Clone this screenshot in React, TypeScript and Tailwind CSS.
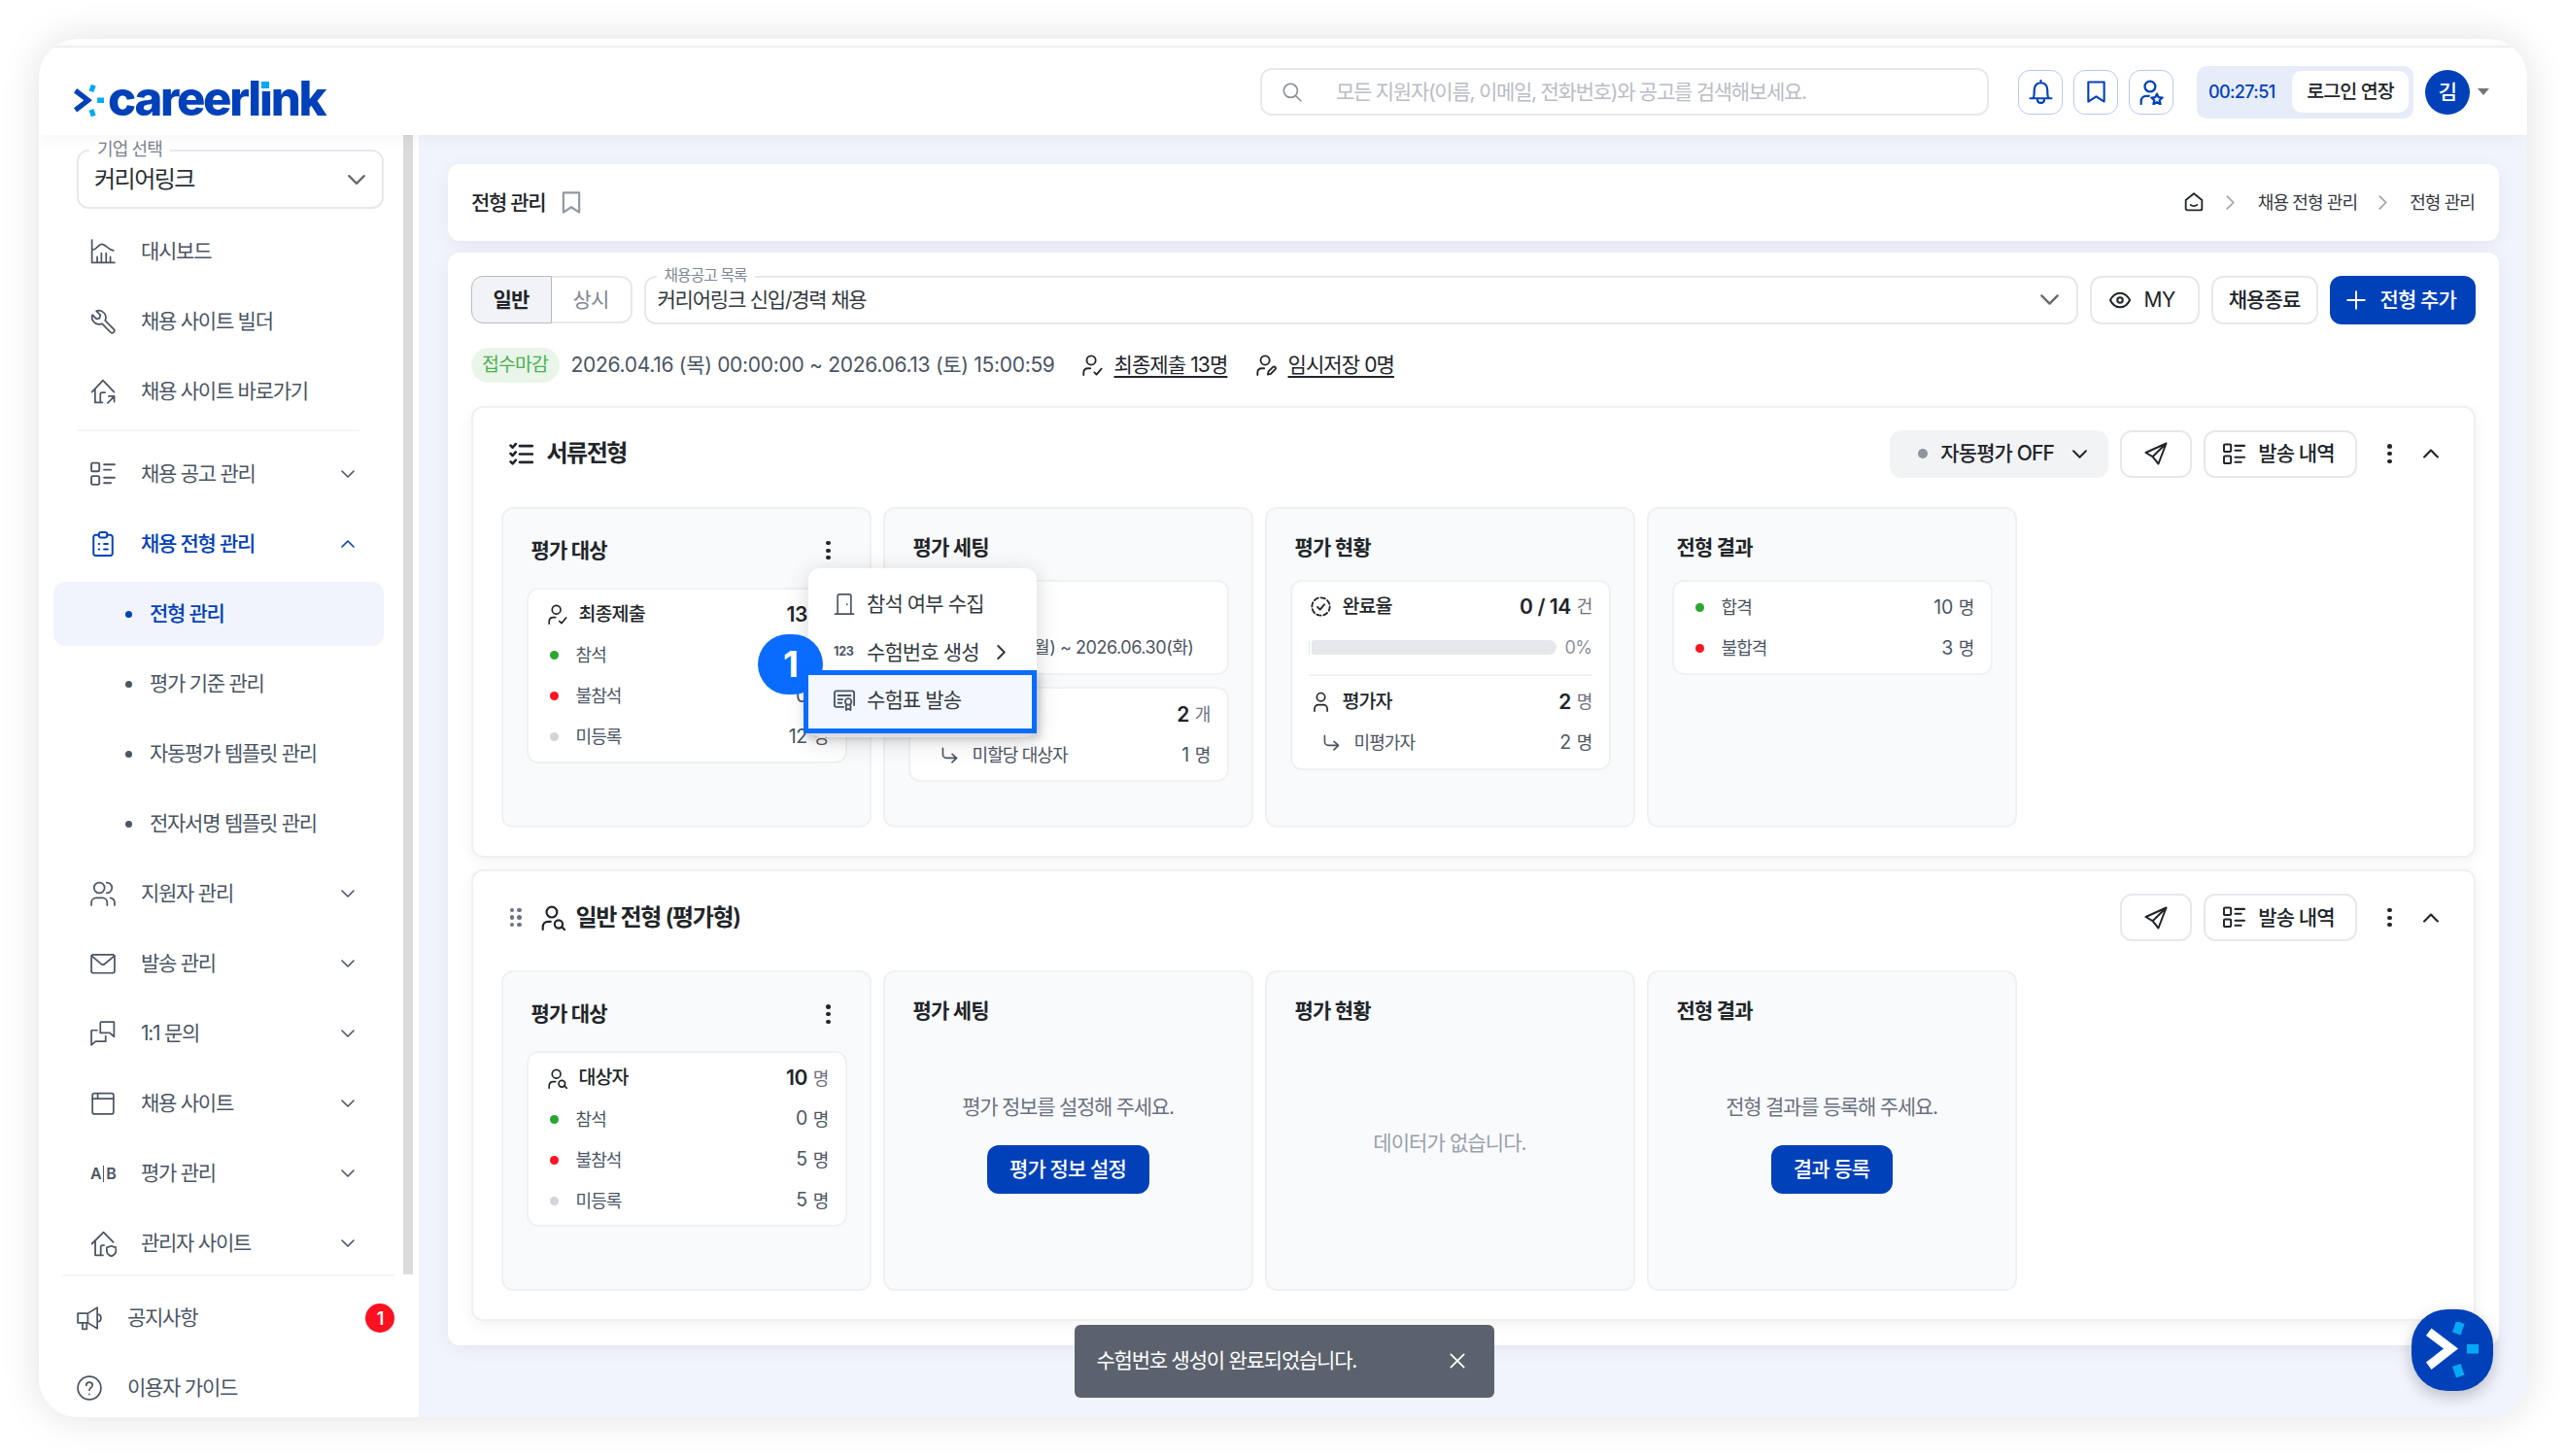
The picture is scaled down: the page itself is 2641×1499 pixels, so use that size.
import React from "react";
import clsx from "clsx";

type IconProps = { className?: string; sw?: number; children?: React.ReactNode; box?: string };

function Svg({ className, sw = 1.6, children, box = "0 0 24 24" }: IconProps) {
  return (
    <svg
      viewBox={box}
      className={clsx("shrink-0", className)}
      fill="none"
      stroke="currentColor"
      strokeWidth={sw}
      strokeLinecap="round"
      strokeLinejoin="round"
    >
      {children}
    </svg>
  );
}

const ChartIcon = () => (
  <Svg className="size-[26px]">
    <path d="M1.5 1v21.5h21.5M1.5 10.5c5 0 5.500-5.500 9.500-5.500s5.500 5.500 11 6M6.500 22v-5M10.500 22v-8.500M15 22v-8.500M19 22v-5" />
  </Svg>
);
const WrenchIcon = () => (
  <Svg className="size-[26px]">
    <path d="M22.200 19.200 14 11a6.600 6.600 0 0 0-8.300-9L9.500 5.800 8.800 8.800 5.800 9.500 2 5.700a6.600 6.600 0 0 0 9 8.300l8.200 8.200a2.100 2.100 0 0 0 3-3Z" />
  </Svg>
);
const HomeLinkIcon = () => (
  <Svg className="size-[26px]">
    <path d="M1.500 12.500 12 1.500l10.500 11M4.500 10v12.500h7M9.500 22v-7.500a1.500 1.500 0 0 1 1.500-1.500h3M16.500 23l6-6M17.500 16.500h5.200v5.200" />
  </Svg>
);
const ListIcon = ({ className = "size-[26px]", sw = 1.7 }: IconProps) => (
  <Svg className={className} sw={sw}>
    <rect x="1" y="1.500" width="7.500" height="8" rx="1.200" />
    <rect x="1" y="14" width="7.500" height="8" rx="1.200" />
    <path d="M13 3h10M13 8h6.500M13 15.500h10M13 20.500h6.500" />
  </Svg>
);
const ClipboardIcon = () => (
  <Svg className="size-[26px]" sw={1.8}>
    <path d="M8 3.500H5a2 2 0 0 0-2 2V21a2 2 0 0 0 2 2h14a2 2 0 0 0 2-2V5.500a2 2 0 0 0-2-2h-3" />
    <rect x="8" y="1" width="8" height="5" rx="2" />
    <path d="M8 12h.5M13 12h3.500M8 17h.5M13 17h3.500" />
  </Svg>
);
const UsersIcon = () => (
  <Svg className="size-[26px]">
    <circle cx="8.500" cy="6.500" r="5" />
    <path d="M1 23v-2.500c0-2.500 2-4.500 4.500-4.500h6c2.500 0 4.500 2 4.500 4.500V23M15.500 1.500a5 5 0 0 1 0 10M19 16c2.300.5 4 2.300 4 4.500V23" />
  </Svg>
);
const MailIcon = () => (
  <Svg className="size-[26px]">
    <rect x="1" y="3.500" width="22" height="17.500" rx="1.800" />
    <path d="m1.500 5 9 7.500c1 .8 2 .8 3 0l9-7.500" />
  </Svg>
);
const ChatIcon = () => (
  <Svg className="size-[26px]">
    <path d="M10 1h12.500v14l-4-3.500H9.500V2M6.500 9H1v14l4-3.500h9.500v-5" />
  </Svg>
);
const BrowserIcon = () => (
  <Svg className="size-[26px]">
    <rect x="2" y="2.500" width="20" height="19.500" rx="1.800" />
    <path d="M2 7.500h20M7 3v4" />
  </Svg>
);
const AbIcon = () => (
  <span className="flex w-[26px] items-center justify-between text-[16px] leading-none font-semibold">
    <span>A</span>
    <span className="h-[17px] w-[1.5px] bg-current" />
    <span>B</span>
  </span>
);
const HomeShieldIcon = () => (
  <Svg className="size-[27px]">
    <path d="M1.500 12 12 1.500 21 10.500M4.500 9.500v13h7M9.500 22v-7a1.500 1.500 0 0 1 1.500-1.500h1.500M15 15.500l4.200-1.500 4.200 1.500v3c0 2.500-2 4-4.200 5-2.200-1-4.200-2.500-4.200-5Z" />
  </Svg>
);
const MegaphoneIcon = () => (
  <Svg className="size-[26px]">
    <path d="M1 7.500h9.500v9H1ZM10.500 7.500 19.500 2v20l-9-5.500M5.500 17v5.500h4v-5.500M19.500 8.500c2.300 0 3.500 1.500 3.500 3.500s-1.200 3.500-3.500 3.500" />
  </Svg>
);
const HelpIcon = () => (
  <Svg className="size-[26px]">
    <circle cx="12" cy="12" r="11" />
    <path d="M9 9.500c0-1.800 1.300-3 3-3s3 1.200 3 2.800c0 2.200-3 2.400-3 4.700M12 17.800v.2" />
  </Svg>
);

const Chevron = ({ className = "w-[14px]", dir = "down", sw = 2 }: IconProps & { dir?: "down" | "up" | "right" }) => (
  <Svg
    box="0 0 14 14"
    sw={sw}
    className={clsx(className, dir === "up" && "rotate-180", dir === "right" && "-rotate-90")}
  >
    <path d="m1 4 6 6 6-6" />
  </Svg>
);

/* person glyph, with an optional badge in the lower right corner */
function PersonIcon({ kind, className, sw = 2 }: { kind: "check" | "edit" | "search" | "star" | "plain"; className?: string; sw?: number }) {
  return (
    <Svg className={className} sw={sw}>
      {kind === "plain" ? (
        <>
          <circle cx="12" cy="6.500" r="4.800" />
          <path d="M4.500 23v-3a4.500 4.500 0 0 1 4.500-4.500h6a4.500 4.500 0 0 1 4.500 4.500v3" />
        </>
      ) : (
        <>
          <circle cx="11" cy="6.500" r="5" />
          <path d="M2.500 23v-2.500c0-3 2-5 5-5h2.500" />
        </>
      )}
      {kind === "check" && <path d="m14.500 20 2.500 2.500 5.500-6.500" />}
      {kind === "edit" && <path d="m14 22.500.8-3.500 5-5c1.600-1.400 4 1 2.600 2.600l-5 5Z" />}
      {kind === "search" && (
        <>
          <circle cx="17.500" cy="18" r="3.800" />
          <path d="m20.500 20.500 3 3" />
        </>
      )}
      {kind === "star" && (
        <path d="m17.500 13.500 1.500 3.200 3.700.4-2.700 2.500.8 3.700-3.300-1.900-3.300 1.900.8-3.700-2.700-2.500 3.700-.4Z" />
      )}
    </Svg>
  );
}

const BookmarkIcon = ({ className, sw = 2 }: IconProps) => (
  <Svg className={className} sw={sw}>
    <path d="M3.500 1.500h17v21L12 17l-8.500 5.500Z" />
  </Svg>
);

const SubArrow = () => (
  <Svg className="size-[17px]" sw={2.3}>
    <path d="M2 2v9a5 5 0 0 0 5 5h14M15.500 10.500 22 16l-6.500 6.500" />
  </Svg>
);

const Kebab = () => (
  <span className="flex flex-col gap-[3.500px]">
    <span className="size-[4.200px] rounded-full bg-[#212529]" />
    <span className="size-[4.200px] rounded-full bg-[#212529]" />
    <span className="size-[4.200px] rounded-full bg-[#212529]" />
  </span>
);

function Mark({ className, arrow }: { className: string; arrow: string }) {
  return (
    <svg viewBox="0 0 54 58" className={clsx("shrink-0", className)}>
      <path d="M0 14 5.500 6.500 33 27.500 5.500 49 0 41.500 18 27.500Z" fill={arrow} />
      <path d="m31-1 8.500 3-4 11.500-8.500-3ZM42 23h13v9.500H42ZM27 46l8.500-3 4 11.500-8.500 3Z" fill="#04a9f5" />
    </svg>
  );
}

/* ---------- header ---------- */

const HeaderButton = ({ children }: { children: React.ReactNode }) => (
  <button className="flex h-[46px] w-[46px] items-center justify-center rounded-[12px] border-[1.5px] border-[#b6caee] text-[#0041b9]">
    {children}
  </button>
);

function Header() {
  return (
    <header className="relative z-20 flex h-[90px] shrink-0 items-center bg-white pl-[36px] pr-[39px] shadow-[0_2px_16px_rgba(0,0,0,0.05)]">
      <div className="flex h-[40px] items-center">
        <Mark className="mt-[20px] h-[34px] w-[31px]" arrow="#0041b9" />
        <span className="ml-[4px] mt-[15px] text-[49px] leading-[48px] font-extrabold tracking-[-0.046em] text-[#0041b9]">
          careerl
          <span className="relative">
            i
            <span className="absolute left-[1px] top-[9px] h-[13px] w-[12px] bg-white" />
            <span className="absolute left-[2px] top-[12px] h-[7px] w-[8px] bg-[#04a9f5]" />
          </span>
          nk
        </span>
      </div>
      <div className="ml-auto mt-[1px] flex items-center">
        <div className="flex h-[49px] w-[750px] items-center rounded-[12px] border-2 border-[#e7e8ec] pl-[21px]">
          <Svg className="size-[20px] text-[#868e99]" sw={2}>
            <circle cx="10" cy="10" r="8.500" />
            <path d="m16.500 16.500 6 6" />
          </Svg>
          <span className="ml-[35px] text-[21px] tracking-[-0.06em] text-[#b9bdc5]">모든 지원자(이름, 이메일, 전화번호)와 공고를 검색해보세요.</span>
        </div>
        <div className="ml-[30px] flex gap-[11px]">
          <HeaderButton>
            <Svg className="size-[25px]" sw={2.1}>
              <path d="M1.500 18.500h21M4.500 18c1-1.500 1-3.500 1-7.500C5.500 6 8 3 12 3s6.500 3 6.500 7.500c0 4 0 6 1 7.500M12 3V1M8.500 19c0 2.500 1.500 4 3.500 4s3.500-1.500 3.500-4" />
            </Svg>
          </HeaderButton>
          <HeaderButton>
            <BookmarkIcon className="h-[23px] w-[23px]" sw={2.2} />
          </HeaderButton>
          <HeaderButton>
            <PersonIcon kind="star" className="size-[26px]" sw={2.1} />
          </HeaderButton>
        </div>
        <div className="ml-[24px] flex h-[54px] w-[223px] items-center rounded-[10px] bg-[#e6ecf8] pl-[12px]">
          <span className="w-[86px] text-[18px] font-medium tracking-[-0.035em] text-[#0041b9]">00:27:51</span>
          <span className="flex h-[43px] w-[120px] items-center justify-center rounded-[10px] bg-white text-[19.500px] font-medium text-[#212529]">
            로그인 연장
          </span>
        </div>
        <span className="ml-[12px] flex size-[46px] items-center justify-center rounded-full bg-[#0041b9] text-[21px] font-medium text-white">
          김
        </span>
        <span className="ml-[8px] h-0 w-0 border-x-[6.500px] border-t-[7px] border-x-transparent border-t-[#757575]" />
      </div>
    </header>
  );
}

/* ---------- sidebar ---------- */

type Item = { label: string; icon: React.ReactNode; open?: boolean; arrow?: boolean };

function MenuItem({ label, icon, open, arrow }: Item) {
  return (
    <div className={clsx("flex h-[72px] shrink-0 items-center pl-[53px] pr-[50px]", open ? "text-[#0041b9]" : "text-[#4b5563]")}>
      <span className="flex w-[26px] justify-center">{icon}</span>
      <span className={clsx("ml-[26px] text-[21px] tracking-[-0.06em]", open && "font-medium")}>{label}</span>
      {arrow && (
        <span className="ml-auto">
          <Chevron dir={open ? "up" : "down"} sw={1.6} />
        </span>
      )}
    </div>
  );
}

const topItems: Item[] = [
  { label: "대시보드", icon: <ChartIcon /> },
  { label: "채용 사이트 빌더", icon: <WrenchIcon /> },
  { label: "채용 사이트 바로가기", icon: <HomeLinkIcon /> },
];

const subItems = ["전형 관리", "평가 기준 관리", "자동평가 템플릿 관리", "전자서명 템플릿 관리"];

const restItems: Item[] = [
  { label: "지원자 관리", icon: <UsersIcon /> },
  { label: "발송 관리", icon: <MailIcon /> },
  { label: "1:1 문의", icon: <ChatIcon /> },
  { label: "채용 사이트", icon: <BrowserIcon /> },
  { label: "평가 관리", icon: <AbIcon /> },
  { label: "관리자 사이트", icon: <HomeShieldIcon /> },
];

function Sidebar() {
  return (
    <aside className="flex w-[391px] shrink-0 flex-col bg-white">
      <div className="flex h-[1173px] shrink-0">
        <nav className="flex w-[375px] flex-col overflow-hidden">
          <div className="relative ml-[39px] mt-[15px] flex h-[61px] w-[316px] shrink-0 items-center rounded-[12px] border-2 border-[#e7e8ec] pl-[16px] pr-[17px]">
            <span className="absolute left-[11px] top-[-14px] bg-white px-[8px] text-[18px] leading-[24px] text-[#7a828e]">기업 선택</span>
            <span className="mt-[1px] text-[24px] tracking-[-0.062em] text-[#2b2f33]">커리어링크</span>
            <Chevron className="ml-auto w-[18px] text-[#6b6b6b]" sw={1.8} />
          </div>
          <div className="h-[8px] shrink-0" />
          {topItems.map((it) => (
            <MenuItem key={it.label} {...it} />
          ))}
          <div className="ml-[39px] mt-[3px] mb-[8px] h-[2px] w-[291px] shrink-0 bg-[#f5f5f6]" />
          <MenuItem label="채용 공고 관리" icon={<ListIcon />} arrow />
          <MenuItem label="채용 전형 관리" icon={<ClipboardIcon />} arrow open />
          {subItems.map((label, i) => (
            <div
              key={label}
              className={clsx(
                "ml-[15px] my-[3px] flex h-[66px] w-[340px] shrink-0 items-center rounded-[12px] pl-[74px] text-[21px] tracking-[-0.06em]",
                i === 0 ? "bg-[#f1f4fd] font-medium text-[#0041b9]" : "text-[#4b5563]"
              )}
            >
              <span className="size-[7px] rounded-full bg-current" />
              <span className="ml-[18px]">{label}</span>
            </div>
          ))}
          {restItems.map((it) => (
            <MenuItem key={it.label} {...it} arrow />
          ))}
        </nav>
        <div className="w-[10px] bg-[#dbdbdb]" />
      </div>
      <div className="ml-[24px] h-[2px] w-[342px] shrink-0 bg-[#f6f6f7]" />
      <div className="mt-[7px] flex h-[72px] shrink-0 items-center pl-[39px] pr-[25px] text-[21px] tracking-[-0.06em] text-[#4b5563]">
        <MegaphoneIcon />
        <span className="ml-[26px]">공지사항</span>
        <span className="ml-auto flex size-[30px] items-center justify-center rounded-full bg-[#fb1120] text-[18px] font-semibold text-white">1</span>
      </div>
      <div className="flex h-[72px] shrink-0 items-center pl-[39px] text-[21px] tracking-[-0.06em] text-[#4b5563]">
        <HelpIcon />
        <span className="ml-[26px]">이용자 가이드</span>
      </div>
    </aside>
  );
}

/* ---------- process columns ---------- */

function Column({ title, kebab, children }: { title: string; kebab?: boolean; children?: React.ReactNode }) {
  return (
    <div className="flex h-[330px] w-[381px] flex-col rounded-[12px] border-2 border-[#f0f1f3] bg-[#f9fafc] px-[24px]">
      <div
        className={clsx(
          "flex shrink-0 items-center justify-between pl-[5px] text-[21px] font-semibold text-[#212529]",
          kebab ? "mt-[25px] h-[36px] pr-[16px]" : "mt-[22px] h-[36px]"
        )}
      >
        <span>{title}</span>
        {kebab && <Kebab />}
      </div>
      <div className={clsx("flex flex-1 flex-col", kebab ? "mt-[20px]" : "mt-[15px]")}>{children}</div>
    </div>
  );
}

const Panel = ({ className, children }: { className?: string; children: React.ReactNode }) => (
  <div className={clsx("flex w-[330px] shrink-0 flex-col rounded-[12px] border-2 border-[#f0f1f3] bg-white pl-[17px] pr-[17px]", className)}>
    {children}
  </div>
);

function HeadRow({ icon, label, value, unit }: { icon?: React.ReactNode; label?: string; value: string; unit: string }) {
  return (
    <div className="flex h-[42px] shrink-0 items-center">
      {icon && <span className="flex w-[25px] justify-center text-[#212529]">{icon}</span>}
      {label && <span className="ml-[10px] text-[19.500px] font-medium text-[#212529]">{label}</span>}
      <span className="ml-auto text-[21px] font-semibold tracking-[-0.02em] text-[#212529]">{value}</span>
      <span className="ml-[6px] text-[18px] text-[#6b7280]">{unit}</span>
    </div>
  );
}

function DotRow({ color, label, value, unit = "명" }: { color: string; label: string; value: string; unit?: string }) {
  return (
    <div className="flex h-[42px] shrink-0 items-center text-[18px] text-[#4b5563]">
      <span className={clsx("ml-[5px] size-[9px] rounded-full", color)} />
      <span className="ml-[18px]">{label}</span>
      <span className="ml-auto text-[19.500px] tracking-[-0.02em]">{value}</span>
      <span className="ml-[6px]">{unit}</span>
    </div>
  );
}

function SubRow({ label, value, unit = "명", className }: { label: string; value: string; unit?: string; className?: string }) {
  return (
    <div className={clsx("flex h-[42px] shrink-0 items-center text-[18px] text-[#4b5563]", className)}>
      <SubArrow />
      <span className="ml-[15px]">{label}</span>
      <span className="ml-auto text-[19.500px] tracking-[-0.02em]">{value}</span>
      <span className="ml-[6px]">{unit}</span>
    </div>
  );
}

const Empty = ({ text, button, width }: { text: string; button: string; width: string }) => (
  <div className="flex flex-col items-center pt-[51px]">
    <span className="text-[21px] leading-[30px] tracking-[-0.06em] text-[#6b7280]">{text}</span>
    <button className={clsx("mt-[24px] flex h-[50px] items-center justify-center rounded-[12px] bg-[#0041b9] text-[21px] font-medium text-white", width)}>
      {button}
    </button>
  </div>
);

function StageActions({ auto }: { auto?: boolean }) {
  return (
    <div className="ml-auto flex items-center gap-[12px] text-[21px] text-[#212529]">
      {auto && (
        <div className="flex h-[49px] w-[225px] items-center rounded-[12px] bg-[#f2f3f5] pl-[29px] font-medium">
          <span className="size-[10px] rounded-full bg-[#8d949e]" />
          <span className="ml-[13px]">자동평가 OFF</span>
          <Chevron className="ml-[19px] w-[15px]" sw={1.8} />
        </div>
      )}
      <div className="flex h-[49px] w-[74px] items-center justify-center rounded-[12px] border-2 border-[#e7e8ec]">
        <Svg className="size-[24px]" sw={2}>
          <path d="M22.500 1.500 1.500 11l7 4.200ZM22.500 1.500 8.500 15.200l6 7.300Z" />
        </Svg>
      </div>
      <div className="flex h-[49px] w-[158px] items-center rounded-[12px] border-2 border-[#e7e8ec] pl-[18px] font-medium">
        <ListIcon className="size-[23px]" sw={2.1} />
        <span className="ml-[13px]">발송 내역</span>
      </div>
      <div className="ml-[19px] flex items-center">
        <Kebab />
        <Chevron className="ml-[32px] w-[16px]" dir="up" sw={1.9} />
      </div>
    </div>
  );
}

const Stage = ({ head, auto, className, children }: { head: React.ReactNode; auto?: boolean; className?: string; children: React.ReactNode }) => (
  <section className={clsx("flex h-[465px] shrink-0 flex-col rounded-[12px] border-2 border-[#f0f0f1] bg-white shadow-[0_4px_16px_rgba(0,0,0,0.05)]", className)}>
    <div className="mt-[23px] flex h-[49px] items-center pl-[37px] pr-[36px]">
      {head}
      <StageActions auto={auto} />
    </div>
    <div className="mt-[30px] flex gap-[12px] pl-[29px]">{children}</div>
  </section>
);

function ContextMenu() {
  return (
    <div className="absolute left-[792px] top-[545px] z-30 h-[174px] w-[235px] rounded-[12px] bg-white shadow-[0_4px_24px_rgba(0,0,0,0.16)]">
      {/* step marker sits over the menu edge but under the highlighted row */}
      <span className="absolute left-[-52px] top-[68px] flex h-[62px] w-[67px] items-center justify-center rounded-full bg-[#0a6cff] text-[37px] font-bold text-white">
        1
      </span>
      <div className="mt-[12px] flex h-[49px] items-center pl-[26px] text-[21px] text-[#343a40]">
        <Svg className="size-[22px] text-[#4b5563]" sw={1.8}>
          <path d="M4.500 23V3a2 2 0 0 1 2-2h11a2 2 0 0 1 2 2v20M1.500 23h21M15 12v.5" />
        </Svg>
        <span className="ml-[12px]">참석 여부 수집</span>
      </div>
      <div className="mt-[1px] flex h-[49px] items-center pl-[26px] text-[21px] text-[#343a40]">
        <span className="w-[22px] text-[12.500px] font-bold tracking-[-0.02em] text-[#4b5563]">123</span>
        <span className="ml-[12px]">수험번호 생성</span>
        <Chevron className="ml-[15px] w-[15px]" dir="right" sw={1.9} />
      </div>
      <div className="relative left-[-5px] mt-[-6px] flex h-[65px] w-[240px] items-center border-[5px] border-[#0a6cff] bg-[#f3f7ff] pl-[26px] pb-[3px] text-[21px] text-[#343a40] shadow-[3px_5px_8px_rgba(0,0,0,0.18)]">
        <Svg className="size-[22px] text-[#4b5563]" sw={2}>
          <path d="M11 19.500H3a2 2 0 0 1-2-2V3.500a2 2 0 0 1 2-2h18a2 2 0 0 1 2 2v14M5 6.500h14M5 11h5M5 15h4" />
          <circle cx="16.500" cy="13.500" r="3.500" />
          <path d="M14 16.500V23l2.500-1.500L19 23v-6.500" />
        </Svg>
        <span className="ml-[12px]">수험표 발송</span>
      </div>
    </div>
  );
}

export default function App() {
  return (
    <div className="h-[1499px] w-[2641px] overflow-hidden bg-white p-[40px] font-['Inter','Noto_Sans_CJK_KR',sans-serif] tracking-[-0.056em] whitespace-nowrap">
      <div className="relative flex h-[1419px] w-[2561px] flex-col overflow-hidden rounded-[40px] bg-white shadow-[0_0_40px_rgba(0,0,0,0.12)]">
        <div className="h-[9px] shrink-0 border-b-2 border-[#f2f2f3]" />
        <Header />
        <div className="flex flex-1">
          <Sidebar />
          <main className="flex flex-1 flex-col bg-[#f1f4fd] pl-[29.500px] pr-[29.500px] pt-[30px]">
            <div className="flex h-[78.600px] shrink-0 items-center rounded-[12px] bg-white px-[24.500px] shadow-[0_4px_20px_rgba(0,0,0,0.06)]">
              <span className="text-[21px] font-medium tracking-[-0.062em] text-[#212529]">전형 관리</span>
              <BookmarkIcon className="ml-[15px] h-[23px] w-[24px] text-[#9299a3]" sw={2.3} />
              <div className="ml-auto flex items-center text-[18px] text-[#343a40]">
                <Svg className="size-[20px] text-[#212529]" sw={2.2}>
                  <path d="M2 9.500 12 1.500l10 8V20a2 2 0 0 1-2 2H4a2 2 0 0 1-2-2ZM8 15.500c2 1.800 6 1.800 8 0" />
                </Svg>
                <Chevron className="ml-[20px] mr-[21px] w-[15px] text-[#9ca3af]" dir="right" sw={1.6} />
                <span>채용 전형 관리</span>
                <Chevron className="ml-[19px] mr-[20px] w-[15px] text-[#9ca3af]" dir="right" sw={1.6} />
                <span>전형 관리</span>
              </div>
            </div>

            <div className="mt-[12px] flex h-[1125px] shrink-0 flex-col rounded-[12px] bg-white px-[24px] pt-[24px] shadow-[0_4px_20px_rgba(0,0,0,0.06)]">
              <div className="flex h-[50px] shrink-0 items-center text-[21px] text-[#212529]">
                <div className="flex h-[49px]">
                  <span className="flex w-[83px] items-center justify-center rounded-l-[12px] border-[1.500px] border-[#b9babc] bg-[#f2f3f6] font-semibold">
                    일반
                  </span>
                  <span className="flex w-[83px] items-center justify-center rounded-r-[12px] border-2 border-l-0 border-[#e7e8ec] text-[#7f8792]">
                    상시
                  </span>
                </div>
                <div className="relative ml-[12px] flex h-[50px] flex-1 items-center rounded-[12px] border-2 border-[#e7e8ec] pl-[12px] pr-[18px]">
                  <span className="absolute left-[11px] top-[-14px] bg-white px-[8px] text-[15.750px] leading-[24px] text-[#7f8792]">채용공고 목록</span>
                  <span className="tracking-[-0.058em] text-[#343a40]">커리어링크 신입/경력 채용</span>
                  <Chevron className="ml-auto w-[19px] text-[#6b6b6b]" sw={1.8} />
                </div>
                <div className="ml-[12px] flex h-[50px] w-[113px] items-center rounded-[12px] border-2 border-[#e7e8ec] pl-[18px]">
                  <Svg className="size-[22px]" sw={2.2}>
                    <path d="M1 12c2.500-5 6.500-8 11-8s8.500 3 11 8c-2.500 5-6.500 8-11 8S3.500 17 1 12Z" />
                    <circle cx="12" cy="12" r="3" />
                  </Svg>
                  <span className="ml-[14px] tracking-[-0.02em]">MY</span>
                </div>
                <div className="ml-[12px] flex h-[50px] w-[110px] items-center justify-center rounded-[12px] border-2 border-[#e7e8ec] font-medium">
                  채용종료
                </div>
                <div className="ml-[12px] flex h-[50px] w-[150px] items-center rounded-[12px] bg-[#0041b9] pl-[17px] font-medium text-white">
                  <Svg className="size-[20px]" sw={2.3}>
                    <path d="M12 1.500v21M1.500 12h21" />
                  </Svg>
                  <span className="ml-[15px]">전형 추가</span>
                </div>
              </div>

              <div className="mt-[24px] flex h-[36px] shrink-0 items-center text-[21px]">
                <span className="flex h-[36px] w-[91px] items-center justify-center rounded-full bg-[#e9f5e9] text-[19.500px] text-[#4caf50]">접수마감</span>
                <span className="ml-[12px] w-[498px] tracking-[-0.014em] text-[#4b5563]">2026.04.16 (목) 00:00:00 ~ 2026.06.13 (토) 15:00:59</span>
                <PersonIcon kind="check" className="ml-[27px] size-[22px] text-[#212529]" />
                <span className="ml-[12px] w-[118px] text-[#212529] underline underline-offset-4 decoration-[1.500px]">최종제출 13명</span>
                <PersonIcon kind="edit" className="ml-[27px] size-[22px] text-[#212529]" />
                <span className="ml-[12px] text-[#212529] underline underline-offset-4 decoration-[1.500px]">임시저장 0명</span>
              </div>

              <Stage
                className="mt-[24px]"
                auto
                head={
                  <>
                    <Svg className="size-[25px] text-[#212529]" sw={2.5}>
                      <path d="M10.500 4H23M10.500 12H23M10.500 20H23M1.500 3.500 3.500 5.500 6.500 2M1.500 11.500l2 2 3-3.500M1.500 19.500l2 2 3-3.500" />
                    </Svg>
                    <span className="ml-[14px] text-[24px] font-semibold tracking-[-0.062em] text-[#212529]">서류전형</span>
                  </>
                }
              >
                <Column title="평가 대상" kebab>
                  <Panel className="h-[181px] pt-[5px]">
                    <HeadRow icon={<PersonIcon kind="check" className="size-[21px]" sw={1.9} />} label="최종제출" value="13" unit="명" />
                    <DotRow color="bg-[#2ba52f]" label="참석" value="1" />
                    <DotRow color="bg-[#f81521]" label="불참석" value="0" />
                    <DotRow color="bg-[#d1d5db]" label="미등록" value="12" />
                  </Panel>
                </Column>
                <Column title="평가 세팅">
                  <Panel className="h-[98px] justify-end pb-[5px]">
                    <div className="flex h-[42px] items-center text-[18px] text-[#4b5563]">
                      <span className="ml-auto mr-[17px] tracking-[-0.025em]">(월) ~ 2026.06.30(화)</span>
                    </div>
                  </Panel>
                  <Panel className="mt-[12px] h-[98px] pt-[6px]">
                    <HeadRow value="2" unit="개" />
                    <SubRow label="미할당 대상자" value="1" className="pl-[15px]" />
                  </Panel>
                </Column>
                <Column title="평가 현황">
                  <Panel className="h-[196px] pt-[5px]">
                    <HeadRow
                      icon={
                        <Svg className="size-[21px]" sw={2.1}>
                          <circle cx="12" cy="12" r="10.500" strokeDasharray="5 3.200" />
                          <path d="m8 12.500 3 3 5-6" />
                        </Svg>
                      }
                      label="완료율"
                      value="0 / 14"
                      unit="건"
                    />
                    <div className="flex h-[42px] shrink-0 items-center">
                      <span className="h-[14px] w-[1px] bg-[#dcefdc]" />
                      <span className="ml-[2px] h-[15px] w-[252px] rounded-l-[3px] rounded-r-[8px] bg-[#e5e7eb]" />
                      <span className="ml-auto text-[18px] tracking-[-0.03em] text-[#8b929c]">0%</span>
                    </div>
                    <div className="mt-[6px] mb-[6px] h-[2px] shrink-0 bg-[#f0f1f3]" />
                    <HeadRow icon={<PersonIcon kind="plain" className="size-[21px]" sw={1.9} />} label="평가자" value="2" unit="명" />
                    <SubRow label="미평가자" value="2" className="pl-[15px]" />
                  </Panel>
                </Column>
                <Column title="전형 결과">
                  <Panel className="h-[98px] pt-[6px]">
                    <DotRow color="bg-[#2ba52f]" label="합격" value="10" />
                    <DotRow color="bg-[#f81521]" label="불합격" value="3" />
                  </Panel>
                </Column>
              </Stage>

              <Stage
                className="mt-[12.500px]"
                head={
                  <>
                    <span className="ml-[1px] grid grid-cols-2 gap-x-[3px] gap-y-[3px] text-[#6b7280]">
                      {[0, 1, 2, 3, 4, 5].map((i) => (
                        <span key={i} className="size-[4.500px] rounded-full bg-current" />
                      ))}
                    </span>
                    <PersonIcon kind="search" className="ml-[19px] size-[26px] text-[#212529]" />
                    <span className="ml-[11px] text-[24px] font-semibold tracking-[-0.058em] text-[#212529]">일반 전형 (평가형)</span>
                  </>
                }
              >
                <Column title="평가 대상" kebab>
                  <Panel className="h-[181px] pt-[5px]">
                    <HeadRow icon={<PersonIcon kind="search" className="size-[21px]" sw={1.9} />} label="대상자" value="10" unit="명" />
                    <DotRow color="bg-[#2ba52f]" label="참석" value="0" />
                    <DotRow color="bg-[#f81521]" label="불참석" value="5" />
                    <DotRow color="bg-[#d1d5db]" label="미등록" value="5" />
                  </Panel>
                </Column>
                <Column title="평가 세팅">
                  <Empty text="평가 정보를 설정해 주세요." button="평가 정보 설정" width="w-[167px]" />
                </Column>
                <Column title="평가 현황">
                  <span className="mt-[88px] self-center text-[21px] leading-[30px] text-[#9aa1ab]">데이터가 없습니다.</span>
                </Column>
                <Column title="전형 결과">
                  <Empty text="전형 결과를 등록해 주세요." button="결과 등록" width="w-[125px]" />
                </Column>
              </Stage>
            </div>
          </main>
        </div>

        {/* overlays */}
        <ContextMenu />
        <div className="absolute left-[1065.500px] top-[1323.500px] z-30 flex h-[75px] w-[432px] items-center rounded-[6px] bg-[#5b626d] pl-[23px] pr-[30px] text-[21px] text-white">
          <span className="tracking-[-0.058em]">수험번호 생성이 완료되었습니다.</span>
          <Svg className="ml-auto size-[16px]" sw={2.6}>
            <path d="m2 2 20 20M22 2 2 22" />
          </Svg>
        </div>
        <div className="absolute left-[2441.500px] top-[1308px] z-30 flex size-[84px] items-center rounded-[37px] bg-[#0041b9] pl-[15px] shadow-[0_6px_16px_rgba(0,0,0,0.22)]">
          <Mark className="mt-[-1px] h-[58px] w-[54px]" arrow="#ffffff" />
        </div>
      </div>
    </div>
  );
}
